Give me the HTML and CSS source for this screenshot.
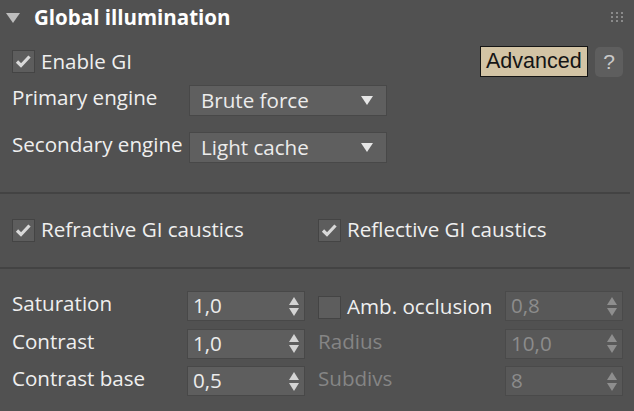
FILE: index.html
```html
<!DOCTYPE html>
<html>
<head>
<meta charset="utf-8">
<link rel="stylesheet" href="styles.css">
</head>
<body>
<div class="panel">
  <div class="header">
    <span class="tri"></span>
    <span class="title">Global illumination</span>
    <svg class="grip" width="12" height="10" viewBox="0 0 12 10">
      <g fill="#8a8a8a">
        <rect x="0" y="0" width="2" height="2"/><rect x="5" y="0" width="2" height="2"/><rect x="10" y="0" width="2" height="2"/>
        <rect x="0" y="4" width="2" height="2"/><rect x="5" y="4" width="2" height="2"/><rect x="10" y="4" width="2" height="2"/>
        <rect x="0" y="8" width="2" height="2"/><rect x="5" y="8" width="2" height="2"/><rect x="10" y="8" width="2" height="2"/>
      </g>
    </svg>
  </div>

  <div class="section top">
    <div class="row enable-row">
      <label class="check">
        <span class="box"><svg width="21" height="21" viewBox="0 0 21 21"><path d="M4 10.5 L8 14.5 L16.5 5.5" fill="none" stroke="#d9d9d9" stroke-width="3.2"/></svg></span>
        <span class="ctext">Enable GI</span>
      </label>
      <span class="spacer"></span>
      <button class="adv">Advanced</button>
      <button class="help">?</button>
    </div>
    <div class="row engine-row first">
      <span class="lbl">Primary engine</span>
      <div class="dropdown"><span>Brute force</span><span class="arrow"></span></div>
    </div>
    <div class="row engine-row second">
      <span class="lbl">Secondary engine</span>
      <div class="dropdown"><span>Light cache</span><span class="arrow"></span></div>
    </div>
  </div>

  <div class="sep"></div>

  <div class="row caustics">
    <label class="check col1">
      <span class="box"><svg width="21" height="21" viewBox="0 0 21 21"><path d="M4 10.5 L8 14.5 L16.5 5.5" fill="none" stroke="#d9d9d9" stroke-width="3.2"/></svg></span>
      <span class="ctext">Refractive GI caustics</span>
    </label>
    <label class="check">
      <span class="box"><svg width="21" height="21" viewBox="0 0 21 21"><path d="M4 10.5 L8 14.5 L16.5 5.5" fill="none" stroke="#d9d9d9" stroke-width="3.2"/></svg></span>
      <span class="ctext">Reflective GI caustics</span>
    </label>
  </div>

  <div class="sep"></div>

  <div class="grid">
    <span class="lbl">Saturation</span>
    <div class="spin"><span>1,0</span><span class="arrows"><span class="up"></span><span class="down"></span></span></div>
    <label class="check">
      <span class="box"></span>
      <span class="ctext">Amb. occlusion</span>
    </label>
    <div class="spin dis"><span>0,8</span><span class="arrows"><span class="up"></span><span class="down"></span></span></div>

    <span class="lbl">Contrast</span>
    <div class="spin"><span>1,0</span><span class="arrows"><span class="up"></span><span class="down"></span></span></div>
    <span class="lbl dim">Radius</span>
    <div class="spin dis"><span>10,0</span><span class="arrows"><span class="up"></span><span class="down"></span></span></div>

    <span class="lbl">Contrast base</span>
    <div class="spin"><span>0,5</span><span class="arrows"><span class="up"></span><span class="down"></span></span></div>
    <span class="lbl dim">Subdivs</span>
    <div class="spin dis"><span>8</span><span class="arrows"><span class="up"></span><span class="down"></span></span></div>
  </div>
</div>
</body>
</html>
```

FILE: styles.css
```css
* { box-sizing: border-box; }
html, body {
  margin: 0;
  padding: 0;
  background: #515151;
}
body {
  width: 634px;
  height: 411px;
  overflow: hidden;
  font-family: "Open Sans", "Noto Sans", sans-serif;
  font-size: 20.6px;
  color: #efefef;
}
.panel {
  padding: 0 11px 0 12px;
}
.header {
  height: 36px;
  display: flex;
  align-items: center;
  margin-left: -6px;
}
.tri {
  width: 0;
  height: 0;
  border-left: 7px solid transparent;
  border-right: 7px solid transparent;
  border-top: 10px solid #bdbdbd;
  margin-right: 14px;
  margin-top: -1px;
}
.title {
  font-weight: 700;
  font-size: 20.5px;
  color: #ffffff;
  line-height: 1;
  margin-top: -2px;
}
.grip {
  margin-left: auto;
  margin-top: -2px;
}
.row {
  display: flex;
  align-items: center;
}
.enable-row {
  margin-top: 10px;
  height: 31px;
}
.check {
  display: flex;
  align-items: center;
  line-height: 1;
}
.box {
  width: 23px;
  height: 23px;
  border: 1px solid #444444;
  background: #5d5d5d;
  display: flex;
  align-items: center;
  justify-content: center;
  margin-right: 6px;
}
.box svg { display: block; }
.ctext {
  white-space: nowrap;
  margin-top: -1px;
}
.spacer { flex: 1; }
.adv {
  font-family: "Liberation Sans", Arial, sans-serif;
  font-size: 21.5px;
  height: 31px;
  width: 108px;
  padding: 0 0 0 5px;
  text-align: left;
  background: #d3c4a5;
  border: 1px solid #151515;
  color: #151515;
  border-radius: 0;
  margin-right: 7px;
  line-height: 1;
}
.help {
  width: 28px;
  height: 30px;
  border: none;
  border-radius: 5px;
  background: #5e5e5e;
  color: #c9c9c9;
  font-family: "Liberation Sans", Arial, sans-serif;
  font-size: 21px;
  padding: 0;
  line-height: 1;
}
.engine-row {
  height: 31px;
}
.engine-row.first { margin-top: 8px; }
.engine-row.second { margin-top: 16px; }
.lbl {
  white-space: nowrap;
  line-height: 1;
}
.engine-row .lbl {
  width: 177px;
  margin-top: -7px;
}
.dropdown {
  width: 198px;
  height: 31px;
  background: #5f5f5f;
  border: 1px solid #484848;
  display: flex;
  align-items: center;
  justify-content: space-between;
  padding: 0 13px 0 11px;
  line-height: 1;
  color: #ececec;
}
.dropdown span:first-child { margin-top: -1px; }
.arrow {
  width: 0;
  height: 0;
  border-left: 6.5px solid transparent;
  border-right: 6.5px solid transparent;
  border-top: 9px solid #e6e6e6;
}
.sep {
  height: 2px;
  background: #434343;
  margin: 0 -7px 0 -12px;
}
.top { margin-bottom: 29px; }
.caustics {
  height: 24px;
  margin: 24px 0 25px;
}
.caustics .col1 { width: 306px; }
.grid {
  margin-top: 22px;
  display: grid;
  grid-template-columns: 175px 118px 200px 118px;
  grid-template-rows: 30px 30px 30px;
  row-gap: 7.5px;
  align-items: center;
}
.grid > .check, .grid > .dim { padding-left: 13px; }
.grid .lbl { margin-top: -5px; }
.grid .check { margin-top: 2px; }
.dim { color: #858585; }
.spin {
  height: 30px;
  background: #5e5e5e;
  border: 1px solid #484848;
  display: flex;
  align-items: center;
  justify-content: space-between;
  padding: 0 5px 0 5px;
  line-height: 1;
  color: #ececec;
}
.spin > span:first-child { margin-top: -1px; }
.arrows {
  display: flex;
  flex-direction: column;
  gap: 3px;
}
.up, .down {
  width: 0;
  height: 0;
  border-left: 5.5px solid transparent;
  border-right: 5.5px solid transparent;
}
.up { border-bottom: 8px solid #d4d4d4; }
.down { border-top: 8px solid #d4d4d4; }
.spin.dis {
  background: #585858;
  border-color: #4a4a4a;
  color: #8c8c8c;
}
.spin.dis .up { border-bottom-color: #8e8e8e; }
.spin.dis .down { border-top-color: #8e8e8e; }
```
